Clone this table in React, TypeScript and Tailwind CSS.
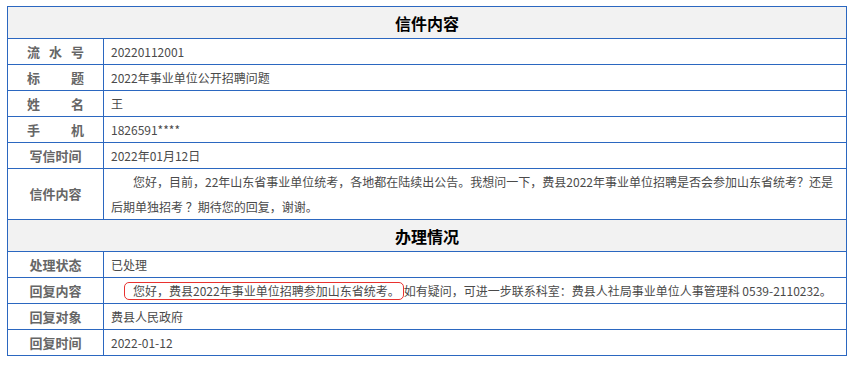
import React from "react";

const B = "border-[#2b67c0]";

function Label({ children, spaced }: { children: React.ReactNode; spaced?: string[] }) {
  return (
    <div className={`w-[96px] shrink-0 flex items-center justify-center border-r ${B} text-[13px] font-bold text-[#666666]`}>
      {spaced ? (
        <div className="w-[57px] flex justify-between">
          {spaced.map((c, i) => (
            <span key={i}>{c}</span>
          ))}
        </div>
      ) : (
        children
      )}
    </div>
  );
}

function Row({ label, spaced, children, h = "h-[26px]" }: { label?: string; spaced?: string[]; children: React.ReactNode; h?: string }) {
  return (
    <div className={`flex ${h} border-t ${B} box-border`}>
      <Label spaced={spaced}>{label}</Label>
      <div className="flex-1 flex items-center pl-[7px] pr-[7px] text-[12px] text-[#4a4a4a]">{children}</div>
    </div>
  );
}

function Header({ title, top }: { title: string; top?: boolean }) {
  return (
    <div className={`flex items-center justify-center bg-[#f2f2f2] ${top ? "h-[31px]" : `h-[32px] border-t ${B}`} box-border text-[16px] font-bold text-black`}>
      {title}
    </div>
  );
}

export default function App() {
  return (
    <div
      className="w-[861px] h-[367px] bg-white pl-[7px] pt-[6px]"
      style={{ fontFamily: '"Noto Sans CJK SC", "Noto Sans", sans-serif' }}
    >
      <div className={`w-[840px] border ${B} box-border`}>
        <Header title="信件内容" top />
        <Row spaced={["流", "水", "号"]}>20220112001</Row>
        <Row spaced={["标", "题"]}>2022年事业单位公开招聘问题</Row>
        <Row spaced={["姓", "名"]}>王</Row>
        <Row spaced={["手", "机"]}>1826591****</Row>
        <Row label="写信时间">2022年01月12日</Row>
        <Row label="信件内容" h="h-[51px]">
          <div className="leading-[25px] whitespace-nowrap">
            <span className="pl-[22px]">您好，目前，22年山东省事业单位统考，各地都在陆续出公告。我想问一下，费县2022年事业单位招聘是否会参加山东省统考？还是</span>
            <br />
            后期单独招考 ？期待您的回复，谢谢。
          </div>
        </Row>
        <Header title="办理情况" />
        <Row label="处理状态">已处理</Row>
        <Row label="回复内容">
          <div className="whitespace-nowrap pl-[13px] flex items-center">
            <span className="inline-block border border-[#e8322f] rounded-[5px] pl-[8px] pr-[3px] leading-[16px]">
              您好，费县2022年事业单位招聘参加山东省统考。
            </span>
            <span>如有疑问，可进一步联系科室：费县人社局事业单位人事管理科 0539-2110232。</span>
          </div>
        </Row>
        <Row label="回复对象">费县人民政府</Row>
        <Row label="回复时间">2022-01-12</Row>
      </div>
    </div>
  );
}
